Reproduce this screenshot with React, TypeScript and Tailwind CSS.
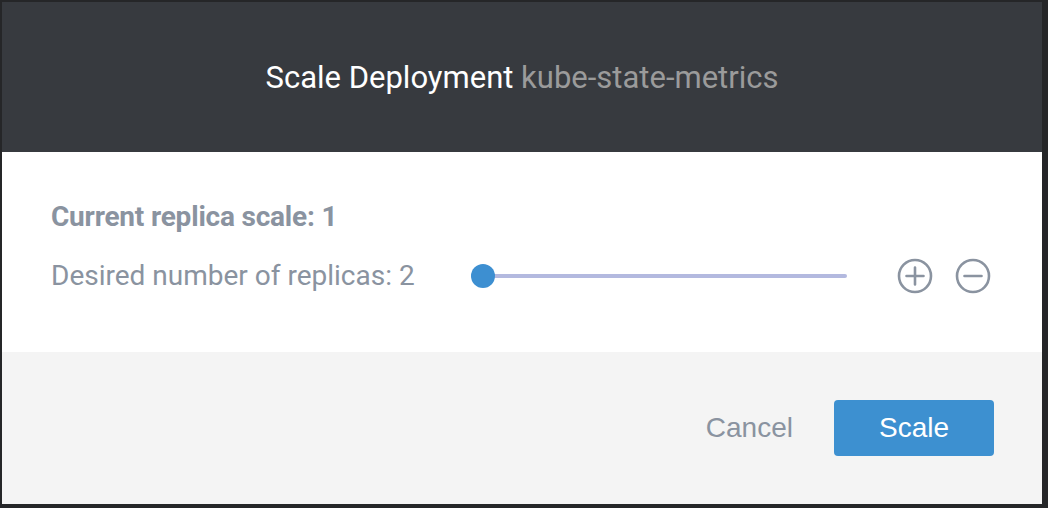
import React, { useState } from 'react';

function PlusCircle() {
  return (
    <svg width="36" height="36" viewBox="0 0 36 36" fill="none" stroke="#8a93a0" strokeWidth="2.6" strokeLinecap="round">
      <circle cx="18" cy="18" r="16" />
      <path d="M18 9.5v17M9.5 18h17" />
    </svg>
  );
}

function MinusCircle() {
  return (
    <svg width="36" height="36" viewBox="0 0 36 36" fill="none" stroke="#8a93a0" strokeWidth="2.6" strokeLinecap="round">
      <circle cx="18" cy="18" r="16" />
      <path d="M9.5 18h17" />
    </svg>
  );
}

export default function App() {
  const [replicas, setReplicas] = useState(2);
  const current = 1;

  return (
    <div className="w-[1048px] h-[508px] bg-[#252628] pt-[2px] pl-[2px] overflow-hidden">
      <div className="w-[1040px] h-[502px] flex flex-col bg-white" style={{ fontFamily: 'Roboto, "Noto Sans", sans-serif' }}>
        {/* Header */}
        <div className="h-[150px] shrink-0 bg-[#373a3f] flex items-center justify-center">
          <h2 className="text-[31px] text-white font-normal leading-none">
            Scale Deployment <span className="text-[#9b9b9b]">kube-state-metrics</span>
          </h2>
        </div>

        {/* Body */}
        <div className="h-[200px] shrink-0 bg-white pl-[49px] pr-[48px] pt-[50px]">
          <div className="text-[28px] font-bold text-[#8a93a0] leading-[30px] tracking-[-0.2px]">
            Current replica scale: {current}
          </div>
          <div className="flex items-center mt-[29px] h-[30px]">
            <div className="w-[420px] text-[28px] text-[#8a93a0] leading-[30px]">
              Desired number of replicas: {replicas}
            </div>
            <div className="relative w-[376px] h-[24px] flex items-center">
              <div className="w-full h-[4px] rounded-full bg-[#b3b9df]" />
              <div className="absolute left-0 top-0 w-[24px] h-[24px] rounded-full bg-[#3d8fd1]" />
            </div>
            <div className="flex items-center gap-[22px] ml-[50px]">
              <button onClick={() => setReplicas(replicas + 1)} className="block">
                <PlusCircle />
              </button>
              <button onClick={() => setReplicas(Math.max(0, replicas - 1))} className="block">
                <MinusCircle />
              </button>
            </div>
          </div>
        </div>

        {/* Footer */}
        <div className="flex-1 bg-[#f4f4f4] flex items-center justify-end pr-[48px]" style={{ fontFamily: '"Liberation Sans", Arial, sans-serif' }}>
          <button className="text-[28px] text-[#8a93a0] px-[10px] mr-[31px]">Cancel</button>
          <button className="w-[160px] h-[56px] rounded-[4px] bg-[#3d90d0] text-white text-[28px]">Scale</button>
        </div>
      </div>
    </div>
  );
}
